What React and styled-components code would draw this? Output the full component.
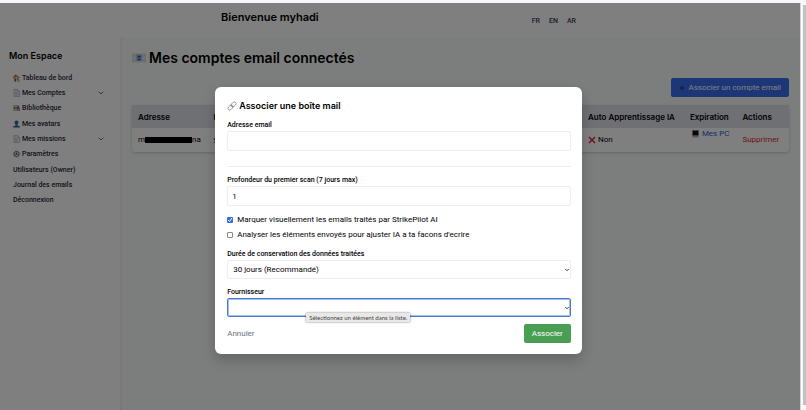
import React from "react";
import styled, { createGlobalStyle } from "styled-components";
import { ChevronDown } from "lucide-react";

const headingFont = `Inter, "Liberation Sans", sans-serif`;

const GlobalStyle = createGlobalStyle`
  *, *::before, *::after { box-sizing: border-box; }
  html, body, #root { height: 100%; }
  body {
    margin: 0;
    overflow: hidden;
    background: #f6f6fc;
    color: #000;
    font-family: Roboto, "Liberation Sans", sans-serif;
    font-size: 8px;
    line-height: 12px;
  }
  button, input, select { font: inherit; color: inherit; }
  h1, h2, p { margin: 0; }
`;

const Window = styled.div`
  display: grid;
  grid-template-columns: minmax(0, 1fr) 6px;
  height: 100%;
  padding-top: 3px;
`;

const Viewport = styled.div`
  position: relative;
  display: flex;
  flex-direction: column;
  min-height: 0;
  background: #fff;
`;

const ScrollTrack = styled.div`
  background: #fafafa;
  border-left: 1px solid #d2d2d2;
  padding: 2px 0 5px 2px;
`;

const ScrollThumb = styled.div`
  height: 100%;
  background: #c1c1c1;
`;

const Header = styled.header`
  display: flex;
  align-items: center;
  justify-content: space-between;
  height: 35px;
  padding: 0 28% 0 221px;
`;

const Greeting = styled.p`
  padding-bottom: 7px;
  font-family: ${headingFont};
  font-size: 11px;
  font-weight: 600;
  line-height: 16px;
`;

const Languages = styled.nav`
  display: flex;
  gap: 9px;
`;

const LanguageLink = styled.a`
  color: #374151;
  font-size: 7px;
  font-weight: 500;
  text-decoration: none;
`;

const Body = styled.div`
  display: flex;
  flex: 1;
  min-height: 0;
`;

const Sidebar = styled.aside`
  flex: none;
  width: 120px;
  padding: 10px 8px 0 9px;
`;

const SidebarTitle = styled.h2`
  font-family: ${headingFont};
  font-size: 9px;
  font-weight: 600;
  line-height: 16px;
`;

const Menu = styled.nav`
  display: grid;
  grid-auto-rows: 1fr;
  height: 138px;
  margin-top: 6px;
  padding: 0 7px 0 4px;
`;

const MenuLink = styled.a`
  display: flex;
  align-items: center;
  gap: 2px;
  color: #1f2937;
  font-size: 7px;
  font-weight: 500;
  text-decoration: none;

  svg { flex: none; }
  svg:last-child:not(:first-child) { margin-left: auto; }
`;

const Main = styled.main`
  flex: 1;
  min-width: 0;
  padding: 10px 11px 0 12px;
  background: #f7fcfa;
  box-shadow: inset 3px 0 3px -2px #e8eaea;
`;

const PageTitle = styled.h1`
  display: flex;
  align-items: center;
  gap: 3px;
  font-family: ${headingFont};
  font-size: 14px;
  font-weight: 600;
  line-height: 20px;
`;

const Toolbar = styled.div`
  display: flex;
  justify-content: flex-end;
  margin: 10px 0 8px;
`;

const AddButton = styled.button`
  display: flex;
  align-items: center;
  gap: 3px;
  height: 19px;
  padding: 0 8px;
  border: 0;
  border-radius: 2px;
  background: #3b6df0;
  color: #fff;
`;

const Table = styled.table`
  width: 100%;
  table-layout: fixed;
  border-collapse: collapse;
  background: #fff;
  border-radius: 3px;
  box-shadow: 0 1px 3px #0003;
`;

const HeadCell = styled.th`
  width: ${(p) => p.$width};
  height: 23px;
  padding: 0 0 0 6px;
  background: #dfe1e6;
  font-family: ${headingFont};
  font-size: 8px;
  font-weight: 600;
  text-align: left;
  white-space: nowrap;
`;

const Cell = styled.td`
  height: 24px;
  padding: 0 0 0 6px;
  vertical-align: ${(p) => (p.$top ? "top" : "middle")};
  white-space: nowrap;
`;

const CellContent = styled.span`
  display: flex;
  align-items: center;
  gap: ${(p) => p.$gap || "0"};
  padding-left: ${(p) => p.$indent || "0"};
`;

const Redaction = styled.span`
  width: 47px;
  height: 6px;
  background: #000;
`;

const PcLink = styled.a`
  color: #2f5fe0;
  text-decoration: none;
`;

const DeleteButton = styled.button`
  padding: 0;
  border: 0;
  background: none;
  color: #dc2626;
`;

const Overlay = styled.div`
  position: absolute;
  inset: 0;
  display: flex;
  justify-content: center;
  align-items: flex-start;
  padding: 84px 3px 0 0;
  background: rgba(0, 0, 0, 0.5);
`;

const Dialog = styled.form`
  width: 46%;
  padding: 12px 11px 11px 12px;
  border-radius: 6px;
  background: #fff;
  box-shadow: 0 6px 14px #0003;
`;

const DialogTitle = styled.h2`
  display: flex;
  align-items: center;
  gap: 2px;
  margin-bottom: 7px;
  font-family: ${headingFont};
  font-size: 9px;
  font-weight: 600;
  line-height: 13px;
`;

const Field = styled.div`
  display: grid;
  margin-bottom: ${(p) => p.$after || "0"};
`;

const Label = styled.label`
  font-size: 7px;
  font-weight: 500;
  line-height: 12px;
`;

const TextInput = styled.input`
  width: 100%;
  height: 20px;
  padding: 0 4px;
  border: 1px solid #eceef1;
  border-radius: 2px;
  background: #fff;
  outline: 0;
`;

const Divider = styled.hr`
  width: 100%;
  margin: 0 0 7px;
  border: 0;
  border-top: 1px solid #eceef1;
`;

const CheckGroup = styled.div`
  margin-bottom: 6px;
`;

const CheckRow = styled.label`
  display: flex;
  align-items: center;
  gap: 4px;
  height: 15px;
`;

const checkMark = `url("data:image/svg+xml,%3Csvg xmlns='http://www.w3.org/2000/svg' viewBox='0 0 12 12'%3E%3Cpath d='M2 6l3 3 5-7' fill='none' stroke='white' stroke-width='2'/%3E%3C/svg%3E")`;

const Checkbox = styled.input`
  appearance: none;
  width: 6px;
  height: 6px;
  margin: 0;
  border: 1px solid #8a8a8a;
  border-radius: 1px;
  background: #fff;

  &:checked {
    border: 0;
    background: #2f6fe8 ${checkMark} center / 6px no-repeat;
  }
`;

const SelectBox = styled.div`
  display: grid;
  align-items: center;

  > * { grid-area: 1 / 1; }
  > svg { justify-self: end; margin-right: 1px; pointer-events: none; }
`;

const Select = styled.select`
  appearance: none;
  width: 100%;
  height: 19px;
  padding: 0 5px;
  border: 1px solid ${(p) => (p.$active ? "#4a78c8" : "#eceef1")};
  border-radius: 2px;
  background: #fff;
  box-shadow: ${(p) => (p.$active ? "inset 0 0 0 1px #a9c0e8" : "none")};
  outline: 0;
`;

const SelectAnchor = styled.div`
  position: relative;
`;

const Tooltip = styled.span`
  position: absolute;
  top: 15px;
  left: 23%;
  padding: 0 3px;
  background: #e9e8e7;
  box-shadow: 0 0 2px #0008;
  color: #444;
  font-family: Lato, "Liberation Sans", sans-serif;
  font-size: 6px;
  line-height: 9px;
  white-space: nowrap;
`;

const Actions = styled.div`
  display: flex;
  justify-content: space-between;
  align-items: center;
`;

const CancelButton = styled.button`
  padding: 0;
  border: 0;
  background: none;
  color: #6b7280;
`;

const SubmitButton = styled.button`
  height: 19px;
  padding: 0 8px;
  border: 0;
  border-radius: 2px;
  background: #4a9e54;
  color: #fff;
`;

const HouseIcon = () => (
  <svg width="7" height="8" viewBox="0 0 14 16" aria-hidden="true">
    <path d="M2 7l4-5 6 6v7H2z" fill="#e9d3b3" />
    <path d="M0 7L5 1l8 6v2L6 4 1 9z" fill="#a9552f" />
    <path d="M3 9h3v6H3z" fill="#8a4a26" />
    <path d="M8 9h3v3H8z" fill="#5f8fc4" />
    <path d="M10 13h3v2h-3z" fill="#5d9948" />
  </svg>
);

const PageIcon = () => (
  <svg width="7" height="8" viewBox="0 0 14 16" aria-hidden="true">
    <path d="M2 1h7l4 4v10H2z" fill="#f0f1f2" stroke="#8b9096" />
    <path d="M9 1v4h4M4 6h3M4 8h6M4 10h6M4 12h6" fill="none" stroke="#a5aab0" />
  </svg>
);

const BooksIcon = () => (
  <svg width="7" height="8" viewBox="0 0 14 16" aria-hidden="true">
    <path d="M1 3h3v10H1z" fill="#5a8f4b" />
    <path d="M4 3h3v10H4z" fill="#c99a3d" />
    <path d="M7 3h3v10H7z" fill="#a34a3c" />
    <path d="M10 4l2-1 2 10-3 1z" fill="#4a6795" />
    <path d="M1 5h9M1 11h9" stroke="#eee" />
  </svg>
);

const PersonIcon = () => (
  <svg width="7" height="8" viewBox="0 0 14 16" aria-hidden="true">
    <circle cx="7" cy="5" r="4" fill="#34689a" />
    <path d="M5 8h4v3l5 2v2H0v-2l5-2z" fill="#34689a" />
  </svg>
);

const GearIcon = () => (
  <svg width="7" height="8" viewBox="0 0 14 16" aria-hidden="true">
    <circle cx="7" cy="8" r="5" fill="none" stroke="#737a80" strokeWidth="2" />
    <circle cx="7" cy="8" r="6" fill="none" stroke="#737a80" strokeWidth="2" strokeDasharray="2 2" />
    <path d="M7 8V3M7 8l4 3M7 8l-4 3" stroke="#737a80" strokeWidth="1.5" />
    <circle cx="7" cy="8" r="2" fill="#5b6268" />
  </svg>
);

const MailIcon = () => (
  <svg width="14" height="10" viewBox="0 0 28 20" aria-hidden="true">
    <path d="M1 2h26v16H1z" fill="#dfe4e9" stroke="#c0c9d2" />
    <path d="M1 18l8-7M27 18l-8-7M1 2l8 7M27 2l-8 7" stroke="#aebac6" fill="none" />
    <path d="M9 3h10v13H9z" fill="#8ba6cc" />
    <path d="M12 6h5v2h-5zM12 9h4v1h-4zM12 12h5v2h-5z" fill="#33598f" />
  </svg>
);

const CrossIcon = () => (
  <svg width="8" height="8" viewBox="0 0 16 16" aria-hidden="true">
    <path d="M2 2l12 12M14 2L2 14" stroke="#e0282e" strokeWidth="3" />
  </svg>
);

const ComputerIcon = () => (
  <svg width="7" height="8" viewBox="0 0 14 16" aria-hidden="true">
    <path d="M1 1h12v10H1z" fill="#111" stroke="#777" />
    <path d="M2 12h10l2 3H0z" fill="#a9adb0" />
  </svg>
);

const PlusIcon = () => (
  <svg width="6" height="6" viewBox="0 0 12 12" aria-hidden="true">
    <path d="M6 1v10M1 6h10" stroke="#2b3f78" strokeWidth="2.6" />
  </svg>
);

const LinkIcon = () => (
  <svg width="10" height="10" viewBox="0 0 20 20" aria-hidden="true">
    <g transform="rotate(-45 10 10)" fill="none">
      <rect x="0" y="6.5" width="11" height="7" rx="3.5" stroke="#75808a" strokeWidth="1.6" />
      <rect x="9" y="6.5" width="11" height="7" rx="3.5" stroke="#75808a" strokeWidth="1.6" />
      <path d="M6 10h8" stroke="#a3adb5" strokeWidth="1.6" />
    </g>
  </svg>
);

const menuItems = [
  { label: "Tableau de bord", Icon: HouseIcon },
  { label: "Mes Comptes", Icon: PageIcon, expandable: true },
  { label: "Bibliothèque", Icon: BooksIcon },
  { label: "Mes avatars", Icon: PersonIcon },
  { label: "Mes missions", Icon: PageIcon, expandable: true },
  { label: "Paramètres", Icon: GearIcon },
  { label: "Utilisateurs (Owner)" },
  { label: "Journal des emails" },
  { label: "Déconnexion" },
];

export default function App() {
  return (
    <>
      <GlobalStyle />
      <Window>
        <Viewport>
          <Header>
            <Greeting>Bienvenue myhadi</Greeting>
            <Languages aria-label="Langue">
              {["FR", "EN", "AR"].map((code) => (
                <LanguageLink key={code} href="#">{code}</LanguageLink>
              ))}
            </Languages>
          </Header>
          <Body>
            <Sidebar>
              <SidebarTitle>Mon Espace</SidebarTitle>
              <Menu>
                {menuItems.map(({ label, Icon, expandable }) => (
                  <MenuLink key={label} href="#">
                    {Icon && <Icon />}
                    <span>{label}</span>
                    {expandable && <ChevronDown size={8} />}
                  </MenuLink>
                ))}
              </Menu>
            </Sidebar>
            <Main>
              <PageTitle><MailIcon />Mes comptes email connectés</PageTitle>
              <Toolbar>
                <AddButton type="button"><PlusIcon />Associer un compte email</AddButton>
              </Toolbar>
              <Table>
                <thead>
                  <tr>
                    <HeadCell scope="col" $width="11.5%">Adresse</HeadCell>
                    <HeadCell scope="col" $width="57%">Fournisseur</HeadCell>
                    <HeadCell scope="col" $width="15.5%">Auto Apprentissage IA</HeadCell>
                    <HeadCell scope="col" $width="8%">Expiration</HeadCell>
                    <HeadCell scope="col" $width="8%">Actions</HeadCell>
                  </tr>
                </thead>
                <tbody>
                  <tr>
                    <Cell><CellContent>m<Redaction />na</CellContent></Cell>
                    <Cell>yahoo</Cell>
                    <Cell><CellContent $gap="2px"><CrossIcon />Non</CellContent></Cell>
                    <Cell $top>
                      <CellContent $gap="3px" $indent="2px"><ComputerIcon /><PcLink href="#">Mes PC</PcLink></CellContent>
                    </Cell>
                    <Cell><DeleteButton type="button">Supprimer</DeleteButton></Cell>
                  </tr>
                </tbody>
              </Table>
            </Main>
          </Body>
          <Overlay>
            <Dialog role="dialog" aria-labelledby="dialog-title">
              <DialogTitle id="dialog-title"><LinkIcon />Associer une boîte mail</DialogTitle>
              <Field $after="15px">
                <Label htmlFor="email">Adresse email</Label>
                <TextInput id="email" type="email" />
              </Field>
              <Divider />
              <Field $after="6px">
                <Label htmlFor="depth">Profondeur du premier scan (7 jours max)</Label>
                <TextInput id="depth" type="number" defaultValue="1" max="7" />
              </Field>
              <CheckGroup>
                <CheckRow>
                  <Checkbox type="checkbox" defaultChecked />
                  Marquer visuellement les emails traités par StrikePilot AI
                </CheckRow>
                <CheckRow>
                  <Checkbox type="checkbox" />
                  Analyser les éléments envoyés pour ajuster IA a ta facons d'ecrire
                </CheckRow>
              </CheckGroup>
              <Field $after="7px">
                <Label htmlFor="retention">Durée de conservation des données traitées</Label>
                <SelectBox>
                  <Select id="retention"><option>30 jours (Recommandé)</option></Select>
                  <ChevronDown size={6} strokeWidth={3} />
                </SelectBox>
              </Field>
              <Field $after="7px">
                <Label htmlFor="provider">Fournisseur</Label>
                <SelectAnchor>
                  <SelectBox>
                    <Select id="provider" $active required defaultValue=""><option value="" /></Select>
                    <ChevronDown size={6} strokeWidth={3} />
                  </SelectBox>
                  <Tooltip role="tooltip">Sélectionnez un élément dans la liste.</Tooltip>
                </SelectAnchor>
              </Field>
              <Actions>
                <CancelButton type="button">Annuler</CancelButton>
                <SubmitButton type="submit">Associer</SubmitButton>
              </Actions>
            </Dialog>
          </Overlay>
        </Viewport>
        <ScrollTrack><ScrollThumb /></ScrollTrack>
      </Window>
    </>
  );
}
